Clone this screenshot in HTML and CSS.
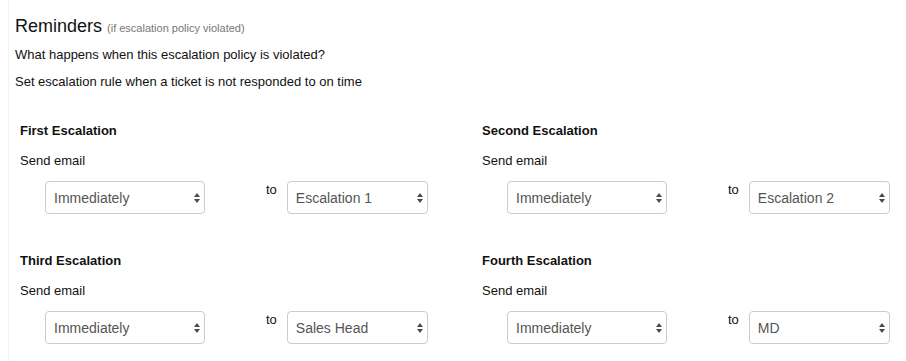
FILE: index.html
```html
<!DOCTYPE html>
<html lang="en">

<head>
  <meta charset="UTF-8" />
  <meta name="viewport" content="width=device-width, initial-scale=1.0" />
  <title>Reminders</title>
  <link rel="stylesheet" href="styles.css">
</head>

<body>
  <div class="panel">
    <h2 class="title">Reminders <small>(if escalation policy violated)</small></h2>
    <p class="intro first">What happens when this escalation policy is violated?</p>
    <p class="intro">Set escalation rule when a ticket is not responded to on time</p>

    <div class="rules">
      <div class="rule">
        <h4>First Escalation</h4>
        <label>Send email</label>
        <div class="controls">
          <div class="selectBox when">
            <select><option>Immediately</option></select>
            <svg class="arrows" width="6" height="12" viewBox="0 0 6 12"><path d="M0 5 3 1 6 5Z M0 7 3 11 6 7Z" /></svg>
          </div>
          <span class="to">to</span>
          <div class="selectBox who">
            <select><option>Escalation 1</option></select>
            <svg class="arrows" width="6" height="12" viewBox="0 0 6 12"><path d="M0 5 3 1 6 5Z M0 7 3 11 6 7Z" /></svg>
          </div>
        </div>
      </div>

      <div class="rule">
        <h4>Second Escalation</h4>
        <label>Send email</label>
        <div class="controls">
          <div class="selectBox when">
            <select><option>Immediately</option></select>
            <svg class="arrows" width="6" height="12" viewBox="0 0 6 12"><path d="M0 5 3 1 6 5Z M0 7 3 11 6 7Z" /></svg>
          </div>
          <span class="to">to</span>
          <div class="selectBox who">
            <select><option>Escalation 2</option></select>
            <svg class="arrows" width="6" height="12" viewBox="0 0 6 12"><path d="M0 5 3 1 6 5Z M0 7 3 11 6 7Z" /></svg>
          </div>
        </div>
      </div>

      <div class="rule">
        <h4>Third Escalation</h4>
        <label>Send email</label>
        <div class="controls">
          <div class="selectBox when">
            <select><option>Immediately</option></select>
            <svg class="arrows" width="6" height="12" viewBox="0 0 6 12"><path d="M0 5 3 1 6 5Z M0 7 3 11 6 7Z" /></svg>
          </div>
          <span class="to">to</span>
          <div class="selectBox who">
            <select><option>Sales Head</option></select>
            <svg class="arrows" width="6" height="12" viewBox="0 0 6 12"><path d="M0 5 3 1 6 5Z M0 7 3 11 6 7Z" /></svg>
          </div>
        </div>
      </div>

      <div class="rule">
        <h4>Fourth Escalation</h4>
        <label>Send email</label>
        <div class="controls">
          <div class="selectBox when">
            <select><option>Immediately</option></select>
            <svg class="arrows" width="6" height="12" viewBox="0 0 6 12"><path d="M0 5 3 1 6 5Z M0 7 3 11 6 7Z" /></svg>
          </div>
          <span class="to">to</span>
          <div class="selectBox who">
            <select><option>MD</option></select>
            <svg class="arrows" width="6" height="12" viewBox="0 0 6 12"><path d="M0 5 3 1 6 5Z M0 7 3 11 6 7Z" /></svg>
          </div>
        </div>
      </div>
    </div>
  </div>
</body>

</html>
```

FILE: styles.css
```css
body {
  margin: 0;
  background-color: #fff;
  font-family: "Liberation Sans", Arial, sans-serif;
  color: #111;
}

.panel {
  margin-left: 8px;
  border-left: 1px solid #f3f3f3;
  padding: 13px 0 0 6px;
  min-height: 361px;
  box-sizing: border-box;
}

.title {
  margin: 0;
  font-size: 18px;
  font-weight: normal;
  line-height: 26px;
}

.title small {
  font-size: 11px;
  color: #777;
}

.intro {
  margin: 0;
  font-size: 13px;
  line-height: 26px;
}

.intro.first {
  margin-top: 1px;
  margin-bottom: 1px;
}

.rules {
  display: grid;
  grid-template-columns: 462px 462px;
  row-gap: 38px;
  margin: 27px 0 0 5px;
}

.rule h4 {
  margin: 0 0 12px;
  font-size: 13px;
  line-height: 18px;
}

.rule label {
  display: block;
  font-size: 13px;
  line-height: 18px;
}

.controls {
  display: flex;
  align-items: flex-start;
  margin-top: 11px;
}

.to {
  font-size: 13px;
  line-height: 18px;
  margin: 0 10px 0 61px;
}

.selectBox {
  position: relative;
}

.selectBox.when {
  margin-left: 25px;
  width: 160px;
}

.selectBox.who {
  width: 141px;
}

.selectBox select {
  appearance: none;
  -webkit-appearance: none;
  width: 100%;
  height: 33px;
  padding: 0 20px 0 8px;
  border: 1px solid #ccc;
  border-radius: 4px;
  background-color: #fff;
  font-family: "Liberation Sans", Arial, sans-serif;
  font-size: 14px;
  color: #555;
}

.arrows {
  position: absolute;
  right: 5px;
  top: 11px;
  fill: #4a4a4a;
}
```
